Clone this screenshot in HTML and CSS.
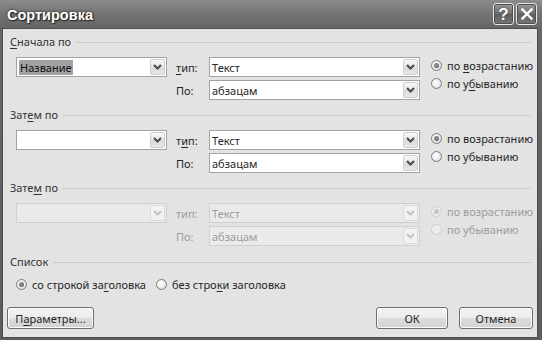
FILE: index.html
```html
<!DOCTYPE html>
<html lang="ru">
<head>
<meta charset="utf-8">
<title>Сортировка</title>
<link rel="stylesheet" href="styles.css">
</head>
<body>
<div class="window">
  <div class="titlebar">
    <span class="title">Сортировка</span>
    <div class="caption-btns">
      <span class="cap-btn help">?</span>
      <span class="cap-btn close"><svg width="12" height="12" viewBox="0 0 12 12"><path d="M1.5 1.5 L10.5 10.5 M10.5 1.5 L1.5 10.5" stroke="#fff" stroke-width="2.4" stroke-linecap="square"/></svg></span>
    </div>
  </div>
  <div class="client">
    <section class="group">
      <div class="group-head"><span class="group-title"><u>С</u>начала по</span><span class="rule"></span></div>
      <div class="group-body">
        <div class="combo key"><span class="value"><span class="sel">Название</span></span><span class="drop"><svg width="9" height="6" viewBox="0 0 9 6"><path d="M1 1 L4.5 4.5 L8 1" fill="none" stroke="#4a4a4a" stroke-width="2"/></svg></span></div>
        <span class="lbl r1"><u>т</u>ип:</span>
        <div class="combo wide r1"><span class="value">Текст</span><span class="drop"><svg width="9" height="6" viewBox="0 0 9 6"><path d="M1 1 L4.5 4.5 L8 1" fill="none" stroke="#4a4a4a" stroke-width="2"/></svg></span></div>
        <div class="radios">
          <span class="radio-item"><span class="radio on"></span><span>по <u>в</u>озрастанию</span></span>
          <span class="radio-item"><span class="radio"></span><span>по у<u>б</u>ыванию</span></span>
        </div>
        <span class="lbl r2">По:</span>
        <div class="combo wide r2"><span class="value">абзацам</span><span class="drop"><svg width="9" height="6" viewBox="0 0 9 6"><path d="M1 1 L4.5 4.5 L8 1" fill="none" stroke="#4a4a4a" stroke-width="2"/></svg></span></div>
      </div>
    </section>

    <section class="group">
      <div class="group-head"><span class="group-title">Зат<u>е</u>м по</span><span class="rule"></span></div>
      <div class="group-body">
        <div class="combo key"><span class="value"></span><span class="drop"><svg width="9" height="6" viewBox="0 0 9 6"><path d="M1 1 L4.5 4.5 L8 1" fill="none" stroke="#4a4a4a" stroke-width="2"/></svg></span></div>
        <span class="lbl r1">т<u>и</u>п:</span>
        <div class="combo wide r1"><span class="value">Текст</span><span class="drop"><svg width="9" height="6" viewBox="0 0 9 6"><path d="M1 1 L4.5 4.5 L8 1" fill="none" stroke="#4a4a4a" stroke-width="2"/></svg></span></div>
        <div class="radios">
          <span class="radio-item"><span class="radio on"></span><span>по возрастанию</span></span>
          <span class="radio-item"><span class="radio"></span><span>по убыванию</span></span>
        </div>
        <span class="lbl r2">По:</span>
        <div class="combo wide r2"><span class="value">абзацам</span><span class="drop"><svg width="9" height="6" viewBox="0 0 9 6"><path d="M1 1 L4.5 4.5 L8 1" fill="none" stroke="#4a4a4a" stroke-width="2"/></svg></span></div>
      </div>
    </section>

    <section class="group disabled">
      <div class="group-head"><span class="group-title">Зате<u>м</u> по</span><span class="rule"></span></div>
      <div class="group-body">
        <div class="combo key"><span class="value"></span><span class="drop"><svg width="9" height="6" viewBox="0 0 9 6"><path d="M1 1 L4.5 4.5 L8 1" fill="none" stroke="#c4c4c4" stroke-width="2"/></svg></span></div>
        <span class="lbl r1">тип:</span>
        <div class="combo wide r1"><span class="value">Текст</span><span class="drop"><svg width="9" height="6" viewBox="0 0 9 6"><path d="M1 1 L4.5 4.5 L8 1" fill="none" stroke="#c4c4c4" stroke-width="2"/></svg></span></div>
        <div class="radios">
          <span class="radio-item"><span class="radio on"></span><span>по возрастанию</span></span>
          <span class="radio-item"><span class="radio"></span><span>по убыванию</span></span>
        </div>
        <span class="lbl r2">По:</span>
        <div class="combo wide r2"><span class="value">абзацам</span><span class="drop"><svg width="9" height="6" viewBox="0 0 9 6"><path d="M1 1 L4.5 4.5 L8 1" fill="none" stroke="#c4c4c4" stroke-width="2"/></svg></span></div>
      </div>
    </section>

    <section class="group list">
      <div class="group-head"><span class="group-title">Список</span><span class="rule"></span></div>
      <div class="list-body">
        <span class="radio-item"><span class="radio on"></span><span>со строкой за<u>г</u>оловка</span></span>
        <span class="radio-item"><span class="radio"></span><span>без стро<u>к</u>и заголовка</span></span>
      </div>
    </section>

    <div class="buttons">
      <button class="btn params">П<u>а</u>раметры...</button>
      <button class="btn ok">ОК</button>
      <button class="btn cancel">Отмена</button>
    </div>
  </div>
</div>
</body>
</html>
```

FILE: styles.css
```css
* { box-sizing: border-box; }
html, body { margin: 0; padding: 0; }
body {
  width: 542px;
  height: 340px;
  overflow: hidden;
  background: #5a5a5a;
  font-family: "Noto Sans", "Open Sans", sans-serif;
  font-size: 11px;
  color: #262626;
}
u { text-decoration: underline; text-underline-offset: 2px; }

.window {
  width: 542px;
  height: 340px;
  display: flex;
  flex-direction: column;
  background: linear-gradient(180deg, #8c8c8c 0px, #747474 14px, #666 28px, #5c5c5c 100%);
}

.titlebar {
  height: 28px;
  flex: none;
  display: flex;
  align-items: flex-start;
  padding: 3px 5px 0 7px;
}
.title {
  font-family: "Liberation Sans", sans-serif;
  font-weight: bold;
  font-size: 14.5px;
  color: #fff;
  line-height: 22px;
  padding-top: 1px;
  text-shadow: 0 0 3px #1e1e1e, 1px 1px 1px #2a2a2a;
}
.caption-btns {
  margin-left: auto;
  display: flex;
  gap: 2px;
}
.cap-btn {
  width: 21px;
  height: 22px;
  border: 1px solid #e6e6e6;
  border-radius: 3px;
  background: linear-gradient(180deg, #9a9a9a, #6e6e6e 50%, #5e5e5e 51%, #777);
  box-shadow: inset 0 0 0 1px #505050;
  display: flex;
  align-items: center;
  justify-content: center;
  color: #fff;
}
.help {
  font-family: "Liberation Sans", sans-serif;
  font-weight: bold;
  font-size: 17px;
  line-height: 1;
  text-shadow: 0 0 2px #333;
}

.client {
  flex: 1;
  margin: 0 4px 2px 2px;
  border: 1px solid #4e4e4e;
  background: #e3e3e3;
  padding: 6px 4px 0 4px;
  display: flex;
  flex-direction: column;
}

.group-head {
  display: flex;
  align-items: center;
  height: 14px;
  margin: 0 2px 8px 3px;
  color: #333;
}
.group-title { white-space: nowrap; line-height: 14px; }
.rule {
  flex: 1;
  height: 1px;
  margin-left: 5px;
  margin-top: 1px;
  background: #c9c9c9;
}
.group + .group { margin-top: 8px; }
.group.list { margin-top: 9px; }

.group-body {
  display: grid;
  grid-template-columns: 151px 42px 211px 1fr;
  grid-template-rows: 20px 20px;
  row-gap: 3px;
  padding-left: 9px;
}
.combo.key { grid-column: 1; grid-row: 1; }
.lbl.r1 { grid-column: 2; grid-row: 1; }
.combo.r1 { grid-column: 3; grid-row: 1; }
.lbl.r2 { grid-column: 2; grid-row: 2; }
.combo.r2 { grid-column: 3; grid-row: 2; }
.radios { grid-column: 4; grid-row: 1 / span 2; }

.lbl {
  padding-left: 9px;
  display: flex;
  align-items: center;
}

.combo {
  height: 20px;
  border: 1px solid #a3a3a3;
  background: #fff;
  display: flex;
  align-items: stretch;
}
.value {
  flex: 1;
  display: flex;
  align-items: center;
  padding-left: 2px;
  white-space: nowrap;
  overflow: hidden;
}
.sel {
  background: #a2a2a2;
  color: #111;
  padding: 0 1px;
  line-height: 15px;
}
.drop {
  width: 15px;
  margin: 1px;
  border: 1px solid #cfcfcf;
  border-radius: 2px;
  background: linear-gradient(180deg, #f8f8f8, #e6e6e6 50%, #dadada 51%, #e8e8e8);
  display: flex;
  align-items: center;
  justify-content: center;
}

.radios {
  margin-left: 11px;
  margin-top: -1px;
  display: flex;
  flex-direction: column;
}
.radio-item {
  display: flex;
  align-items: center;
  gap: 5px;
  height: 18px;
  white-space: nowrap;
}
.radio {
  width: 11px;
  height: 11px;
  flex: none;
  border-radius: 50%;
  border: 1px solid #7c7c7c;
  background: radial-gradient(circle at 40% 40%, #ffffff 0, #f2f2f2 40%, #cfcfcf 100%);
  display: flex;
  align-items: center;
  justify-content: center;
}
.radio.on::after {
  content: "";
  width: 5px;
  height: 5px;
  border-radius: 50%;
  background: radial-gradient(circle at 40% 40%, #9a9a9a, #555);
}

.disabled .lbl,
.disabled .value,
.disabled .radio-item { color: #9c9c9c; }
.disabled .combo { border-color: #d0d0d0; background: #eaeaea; }
.disabled .drop { border-color: #dcdcdc; background: #f2f2f2; }
.disabled .radio { border-color: #cdcdcd; background: #ececec; }
.disabled .radio.on::after { background: #c4c4c4; }

.list-body {
  display: grid;
  grid-template-columns: 140px auto;
  padding-left: 9px;
  height: 14px;
  align-items: center;
}
.list-body .radio-item { height: 14px; }

.buttons {
  display: flex;
  margin-top: 16px;
}
.btn {
  font: inherit;
  color: #262626;
  height: 22px;
  border: 1px solid #6f6f6f;
  border-radius: 3px;
  background: linear-gradient(180deg, #f4f4f4, #ebebeb 50%, #dddddd 51%, #d2d2d2);
  box-shadow: inset 0 0 0 1px #fbfbfb;
  padding: 0;
  display: flex;
  align-items: center;
  justify-content: center;
}
.params { width: 87px; }
.ok { width: 72px; margin-left: auto; }
.cancel { width: 74px; margin-left: 11px; }
```
